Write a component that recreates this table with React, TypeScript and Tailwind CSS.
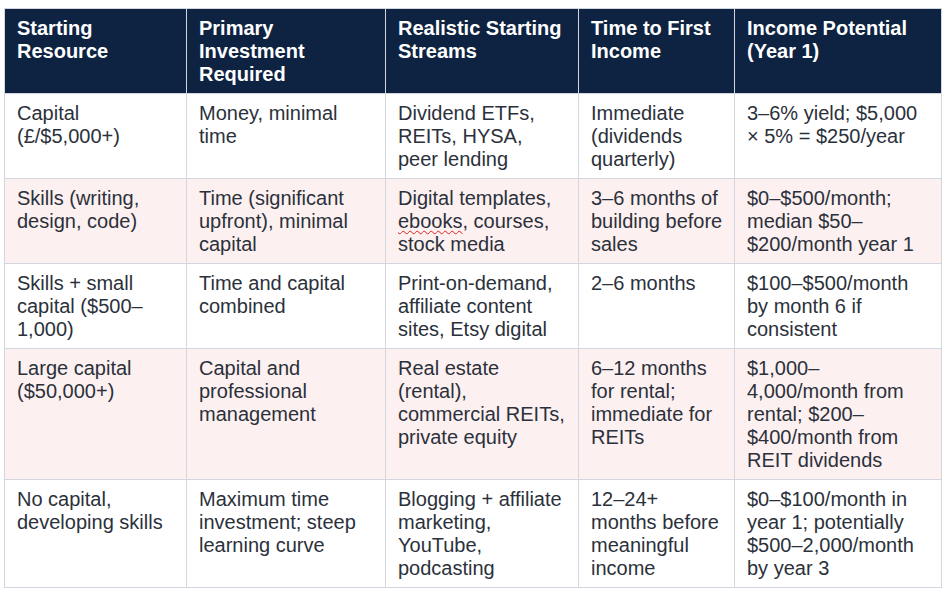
import React from "react";

const headers: React.ReactNode[] = [
  <>Starting<br />Resource</>,
  <>Primary<br />Investment<br />Required</>,
  <>Realistic Starting<br />Streams</>,
  <>Time to First<br />Income</>,
  <>Income Potential<br />(Year 1)</>,
];

const rows: React.ReactNode[][] = [
  [
    <>Capital<br />(£/$5,000+)</>,
    <>Money, minimal<br />time</>,
    <>Dividend ETFs,<br />REITs, HYSA,<br />peer lending</>,
    <>Immediate<br />(dividends<br />quarterly)</>,
    <>3–6% yield; $5,000<br />× 5% = $250/year</>,
  ],
  [
    <>Skills (writing,<br />design, code)</>,
    <>Time (significant<br />upfront), minimal<br />capital</>,
    <>
      Digital templates,
      <br />
      <span className="underline decoration-wavy decoration-[#e02020] decoration-1 underline-offset-2">ebooks</span>, courses,
      <br />
      stock media
    </>,
    <>3–6 months of<br />building before<br />sales</>,
    <>$0–$500/month;<br />median $50–<br />$200/month year 1</>,
  ],
  [
    <>Skills + small<br />capital ($500–<br />1,000)</>,
    <>Time and capital<br />combined</>,
    <>Print-on-demand,<br />affiliate content<br />sites, Etsy digital</>,
    <>2–6 months</>,
    <>$100–$500/month<br />by month 6 if<br />consistent</>,
  ],
  [
    <>Large capital<br />($50,000+)</>,
    <>Capital and<br />professional<br />management</>,
    <>Real estate<br />(rental),<br />commercial REITs,<br />private equity</>,
    <>6–12 months<br />for rental;<br />immediate for<br />REITs</>,
    <>$1,000–<br />4,000/month from<br />rental; $200–<br />$400/month from<br />REIT dividends</>,
  ],
  [
    <>No capital,<br />developing skills</>,
    <>Maximum time<br />investment; steep<br />learning curve</>,
    <>Blogging + affiliate<br />marketing,<br />YouTube,<br />podcasting</>,
    <>12–24+<br />months before<br />meaningful<br />income</>,
    <>$0–$100/month in<br />year 1; potentially<br />$500–2,000/month<br />by year 3</>,
  ],
];

const widths = ["w-[182px]", "w-[199px]", "w-[193px]", "w-[156px]", "w-[207px]"];

export default function App() {
  return (
    <div
      className="w-[946px] h-[594px] bg-white pt-2 pl-1 overflow-hidden"
      style={{ fontFamily: '"Liberation Sans", Arial, sans-serif' }}
    >
      <table className="table-fixed border-collapse w-[937px] text-[20px] leading-[23px]">
        <colgroup>
          {widths.map((w, i) => (
            <col key={i} className={w} />
          ))}
        </colgroup>
        <thead>
          <tr className="bg-[#0e2341]">
            {headers.map((h, i) => (
              <th
                key={i}
                className="border border-[#d3d6de] px-3 pt-2 pb-[7px] text-left align-top font-bold text-white whitespace-nowrap"
              >
                {h}
              </th>
            ))}
          </tr>
        </thead>
        <tbody>
          {rows.map((r, ri) => (
            <tr key={ri} className={ri % 2 === 1 ? "bg-[#fdf0f0]" : "bg-white"}>
              {r.map((c, ci) => (
                <td
                  key={ci}
                  className="border border-[#d3d6de] px-3 pt-2 pb-[7px] align-top text-[#2b313b] whitespace-nowrap"
                >
                  {c}
                </td>
              ))}
            </tr>
          ))}
        </tbody>
      </table>
    </div>
  );
}
